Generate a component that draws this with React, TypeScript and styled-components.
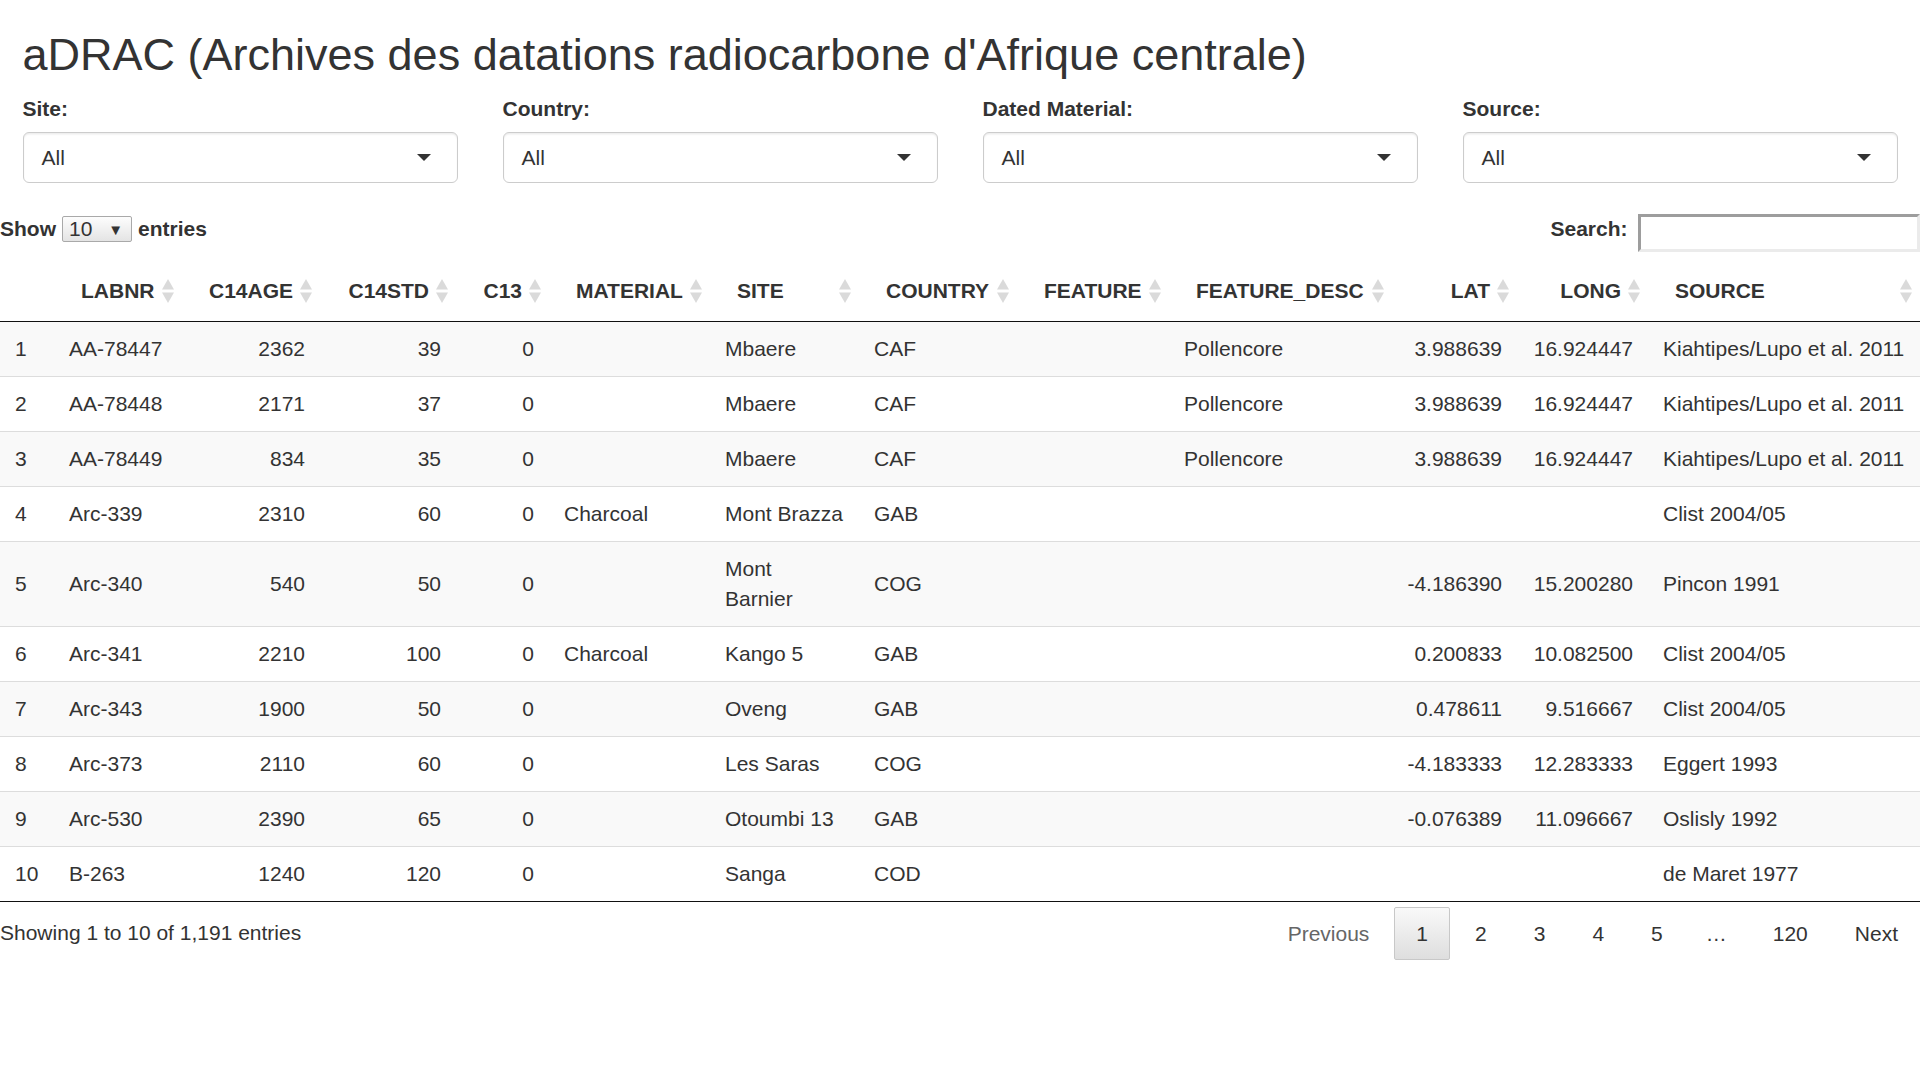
import React from "react";
import styled, { createGlobalStyle } from "styled-components";

const GlobalStyle = createGlobalStyle`
  html, body {
    margin: 0;
    padding: 0;
    background: #ffffff;
  }
  body {
    font-family: "Liberation Sans", Arial, Helvetica, sans-serif;
    font-size: 21px;
    line-height: 30px;
    color: #333333;
  }
  * { box-sizing: border-box; }
`;

const Page = styled.div`
  width: 1920px;
`;

const Title = styled.h2`
  margin: 30px 22.5px 15px;
  font-size: 45px;
  line-height: 49.5px;
  font-weight: 500;
  color: #333333;
`;

const FilterGrid = styled.div`
  display: grid;
  grid-template-columns: repeat(4, 1fr);
`;

const FilterCol = styled.div`
  padding: 0 22.5px;
  margin-bottom: 22.5px;
`;

const FilterLabel = styled.label`
  display: block;
  font-weight: 700;
  line-height: 28px;
  margin-bottom: 9.5px;
`;

const SelectBox = styled.div`
  height: 51px;
  display: flex;
  align-items: center;
  justify-content: space-between;
  padding: 0 18px;
  border: 1px solid #cccccc;
  border-radius: 6px;
  background: #ffffff;
  box-shadow: inset 0 1.5px 1.5px rgba(0, 0, 0, 0.075);
  font-size: 21px;
  color: #333333;
`;

const Caret = styled.span`
  width: 0;
  height: 0;
  margin-right: 7.5px;
  border-left: 7.5px solid transparent;
  border-right: 7.5px solid transparent;
  border-top: 7.5px solid #333333;
`;

const Toolbar = styled.div`
  height: 55.5px;
  padding-top: 8.5px;
  display: flex;
  justify-content: space-between;
  align-items: flex-start;
`;

const BoldLabel = styled.label`
  display: flex;
  align-items: flex-start;
  font-weight: 700;
  line-height: 30px;
`;

const LengthSelect = styled.span`
  width: 70px;
  height: 26px;
  margin: 2px 6px 0;
  padding: 0 8px 0 6px;
  display: flex;
  align-items: center;
  justify-content: space-between;
  border: 1px solid #a9a9a9;
  border-radius: 2px;
  background: linear-gradient(to bottom, #fdfdfd 0%, #e4e4e4 100%);
  font-weight: 400;
  font-size: 21px;
  line-height: 24px;
`;

const SmallArrow = styled.span`
  font-size: 15px;
  line-height: 15px;
  color: #333333;
`;

const SearchInput = styled.input`
  width: 282px;
  height: 38px;
  margin: 0 0 0 10.5px;
  padding: 3px;
  border-style: solid;
  border-width: 3px;
  border-color: #9d9d9d #ebebeb #ebebeb #9d9d9d;
  background: #ffffff;
  font-family: inherit;
  font-size: 21px;
  outline: none;
`;

const Table = styled.table`
  width: 100%;
  table-layout: fixed;
  border-collapse: separate;
  border-spacing: 0;
  border-bottom: 1px solid #111111;
`;

const HeadCell = styled.th<{ $align: "left" | "right" }>`
  position: relative;
  padding: 15px 27px;
  text-align: ${(p) => p.$align};
  font-weight: 700;
  line-height: 30px;
  white-space: nowrap;
  border-bottom: 1px solid #111111;
`;

const SortIconWrap = styled.span`
  position: absolute;
  right: 8px;
  top: 50%;
  transform: translateY(-50%);
  display: flex;
`;

const Row = styled.tr<{ $odd: boolean }>`
  background: ${(p) => (p.$odd ? "#f9f9f9" : "#ffffff")};
`;

const Cell = styled.td<{ $align: "left" | "right"; $top: boolean; $nowrap?: boolean }>`
  padding: 12px 15px;
  line-height: 30px;
  vertical-align: middle;
  text-align: ${(p) => p.$align};
  border-top: ${(p) => (p.$top ? "1px solid #dddddd" : "none")};
  white-space: ${(p) => (p.$nowrap ? "nowrap" : "normal")};
`;

const Footer = styled.div`
  display: flex;
  justify-content: space-between;
  align-items: flex-start;
`;

const Info = styled.div`
  padding-top: 15.855px;
  line-height: 30px;
`;

const Paginate = styled.div`
  padding-top: 5.25px;
  display: flex;
  align-items: center;
`;

const PageButton = styled.span<{ $current?: boolean; $disabled?: boolean }>`
  display: inline-block;
  min-width: 31.5px;
  padding: 10.5px 21px;
  margin-left: 3px;
  line-height: 30px;
  text-align: center;
  border-radius: 2px;
  border: 1px solid ${(p) => (p.$current ? "#c8c8c8" : "transparent")};
  background: ${(p) =>
    p.$current ? "linear-gradient(to bottom, #f9f9f9 0%, #dedede 100%)" : "transparent"};
  color: ${(p) => (p.$disabled ? "#666666" : "#333333")};
`;

const Ellipsis = styled.span`
  padding: 0 21px;
  line-height: 30px;
`;

const SortIcon = () => (
  <SortIconWrap>
    <svg width="12" height="24" viewBox="0 0 12 24" aria-hidden="true">
      <polygon points="6,0 12,10.5 0,10.5" fill="#dadada" />
      <polygon points="0,13.5 12,13.5 6,24" fill="#dadada" />
    </svg>
  </SortIconWrap>
);

type Align = "left" | "right";

const columns: { key: string; label: string; width: number; align: Align; sortable: boolean; nowrap?: boolean }[] = [
  { key: "rn", label: "", width: 54, align: "left", sortable: false },
  { key: "LABNR", label: "LABNR", width: 128, align: "left", sortable: true },
  { key: "C14AGE", label: "C14AGE", width: 138, align: "right", sortable: true, nowrap: true },
  { key: "C14STD", label: "C14STD", width: 136, align: "right", sortable: true, nowrap: true },
  { key: "C13", label: "C13", width: 93, align: "right", sortable: true, nowrap: true },
  { key: "MATERIAL", label: "MATERIAL", width: 161, align: "left", sortable: true },
  { key: "SITE", label: "SITE", width: 149, align: "left", sortable: true },
  { key: "COUNTRY", label: "COUNTRY", width: 158, align: "left", sortable: true },
  { key: "FEATURE", label: "FEATURE", width: 152, align: "left", sortable: true },
  { key: "FEATURE_DESC", label: "FEATURE_DESC", width: 223, align: "left", sortable: true },
  { key: "LAT", label: "LAT", width: 125, align: "right", sortable: true, nowrap: true },
  { key: "LONG", label: "LONG", width: 131, align: "right", sortable: true, nowrap: true },
  { key: "SOURCE", label: "SOURCE", width: 272, align: "left", sortable: true, nowrap: true },
];

const rows: string[][] = [
  ["1", "AA-78447", "2362", "39", "0", "", "Mbaere", "CAF", "", "Pollencore", "3.988639", "16.924447", "Kiahtipes/Lupo et al. 2011"],
  ["2", "AA-78448", "2171", "37", "0", "", "Mbaere", "CAF", "", "Pollencore", "3.988639", "16.924447", "Kiahtipes/Lupo et al. 2011"],
  ["3", "AA-78449", "834", "35", "0", "", "Mbaere", "CAF", "", "Pollencore", "3.988639", "16.924447", "Kiahtipes/Lupo et al. 2011"],
  ["4", "Arc-339", "2310", "60", "0", "Charcoal", "Mont Brazza", "GAB", "", "", "", "", "Clist 2004/05"],
  ["5", "Arc-340", "540", "50", "0", "", "Mont Barnier", "COG", "", "", "-4.186390", "15.200280", "Pincon 1991"],
  ["6", "Arc-341", "2210", "100", "0", "Charcoal", "Kango 5", "GAB", "", "", "0.200833", "10.082500", "Clist 2004/05"],
  ["7", "Arc-343", "1900", "50", "0", "", "Oveng", "GAB", "", "", "0.478611", "9.516667", "Clist 2004/05"],
  ["8", "Arc-373", "2110", "60", "0", "", "Les Saras", "COG", "", "", "-4.183333", "12.283333", "Eggert 1993"],
  ["9", "Arc-530", "2390", "65", "0", "", "Otoumbi 13", "GAB", "", "", "-0.076389", "11.096667", "Oslisly 1992"],
  ["10", "B-263", "1240", "120", "0", "", "Sanga", "COD", "", "", "", "", "de Maret 1977"],
];

const filters = ["Site:", "Country:", "Dated Material:", "Source:"];

export default function App() {
  return (
    <Page>
      <GlobalStyle />
      <Title>aDRAC (Archives des datations radiocarbone d'Afrique centrale)</Title>
      <FilterGrid>
        {filters.map((f) => (
          <FilterCol key={f}>
            <FilterLabel>{f}</FilterLabel>
            <SelectBox>
              <span>All</span>
              <Caret />
            </SelectBox>
          </FilterCol>
        ))}
      </FilterGrid>

      <Toolbar>
        <BoldLabel>
          Show
          <LengthSelect>
            <span>10</span>
            <SmallArrow>▼</SmallArrow>
          </LengthSelect>
          entries
        </BoldLabel>
        <BoldLabel>
          Search:
          <SearchInput type="search" aria-label="Search" />
        </BoldLabel>
      </Toolbar>

      <Table>
        <colgroup>
          {columns.map((c) => (
            <col key={c.key} style={{ width: c.width }} />
          ))}
        </colgroup>
        <thead>
          <tr>
            {columns.map((c) => (
              <HeadCell key={c.key} $align={c.align}>
                {c.label}
                {c.sortable && <SortIcon />}
              </HeadCell>
            ))}
          </tr>
        </thead>
        <tbody>
          {rows.map((r, i) => (
            <Row key={r[0]} $odd={i % 2 === 0}>
              {r.map((v, j) => (
                <Cell key={j} $align={columns[j].align} $top={i > 0} $nowrap={columns[j].nowrap}>
                  {v}
                </Cell>
              ))}
            </Row>
          ))}
        </tbody>
      </Table>

      <Footer>
        <Info>Showing 1 to 10 of 1,191 entries</Info>
        <Paginate>
          <PageButton $disabled>Previous</PageButton>
          <PageButton $current>1</PageButton>
          <PageButton>2</PageButton>
          <PageButton>3</PageButton>
          <PageButton>4</PageButton>
          <PageButton>5</PageButton>
          <Ellipsis>…</Ellipsis>
          <PageButton>120</PageButton>
          <PageButton>Next</PageButton>
        </Paginate>
      </Footer>
    </Page>
  );
}
